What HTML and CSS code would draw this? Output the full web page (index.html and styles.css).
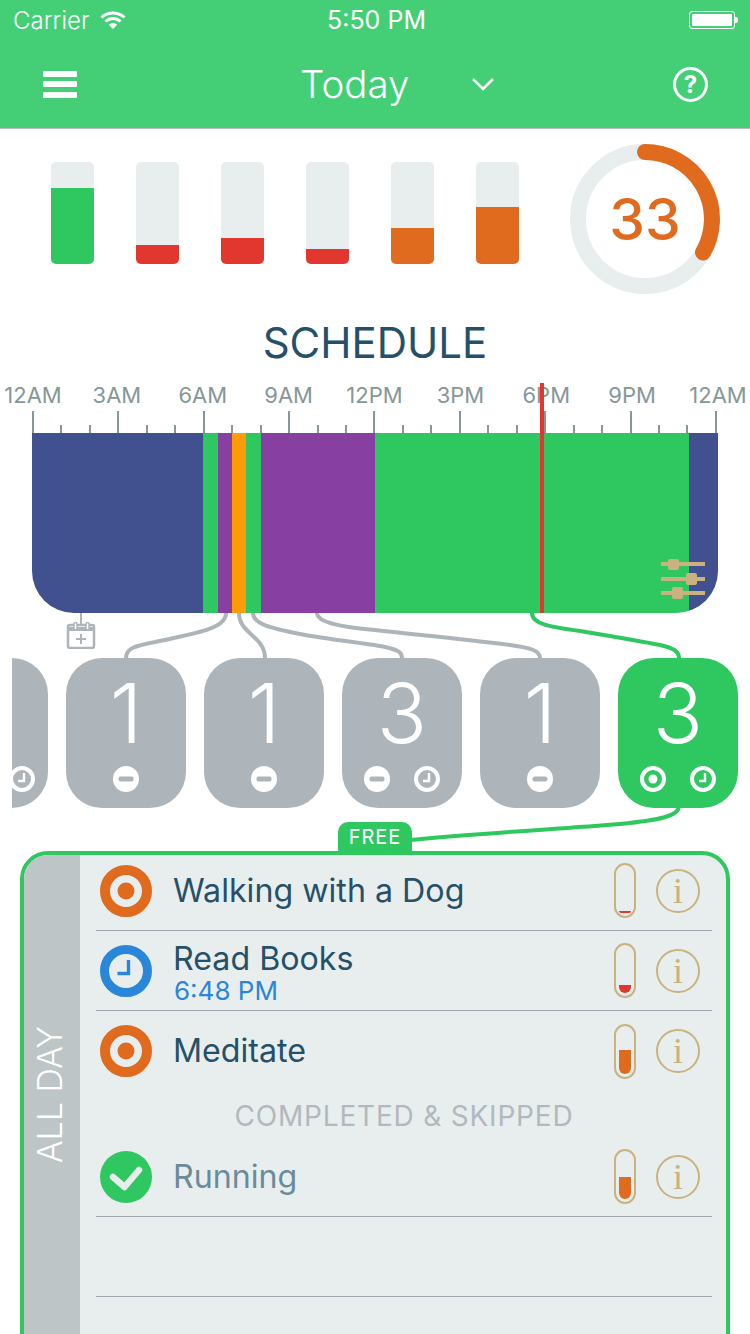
FILE: index.html
```html
<!DOCTYPE html>
<html lang="en">
<head>
  <meta charset="UTF-8">
  <meta name="viewport" content="width=device-width, initial-scale=1.0">
  <title>Today</title>
  <link rel="stylesheet" href="styles.css">
</head>
<body>
  <svg class="defs" width="0" height="0">
    <symbol id="mini-minus" viewBox="0 0 26 26">
      <circle cx="13" cy="13" r="13" fill="#fff"/>
      <rect x="5.500" y="10.500" width="15" height="5" rx="2" fill="#aeb5ba"/>
    </symbol>
    <symbol id="mini-clock" viewBox="0 0 26 26">
      <circle cx="13" cy="13" r="11" fill="none" stroke="#fff" stroke-width="4"/>
      <path d="M15 7v8H9" fill="none" stroke="#fff" stroke-width="2.400"/>
    </symbol>
    <symbol id="mini-target" viewBox="0 0 26 26">
      <circle cx="13" cy="13" r="11" fill="none" stroke="#fff" stroke-width="4"/>
      <circle cx="13" cy="13" r="4.500" fill="#fff"/>
    </symbol>
    <symbol id="target" viewBox="0 0 52 52">
      <circle cx="26" cy="26" r="21" fill="none" stroke="#e06b1e" stroke-width="10"/>
      <circle cx="26" cy="26" r="8.500" fill="#e06b1e"/>
    </symbol>
    <symbol id="clock" viewBox="0 0 52 52">
      <circle cx="26" cy="26" r="21.500" fill="none" stroke="#2a86d8" stroke-width="9"/>
      <path d="M28.500 15v13.500H17.500" fill="none" stroke="#2a86d8" stroke-width="3.400"/>
    </symbol>
    <symbol id="done" viewBox="0 0 52 52">
      <circle cx="26" cy="26" r="26" fill="#2ec760"/>
      <path d="M13 26l11.500 10L39 19" fill="none" stroke="#e8eeee" stroke-width="6.500" stroke-linecap="round" stroke-linejoin="round"/>
    </symbol>
  </svg>

  <div class="page">
    <header class="top">
      <div class="status">
        <span class="carrier">Carrier</span>
        <svg class="wifi" width="26" height="20" viewBox="0 0 26 20">
          <path d="M1.500 7.500C8 1.500 18 1.500 24.500 7.500M5.500 11.500C10 7.500 16 7.500 20.500 11.500" fill="none" stroke="#fff" stroke-width="3"/>
          <path d="M8.800 14.700C11 12.500 15 12.500 17.200 14.700L13 19z" fill="#fff"/>
        </svg>
        <span class="clock-time">5:50 PM</span>
        <div class="battery"><div class="battery-level"></div></div>
        <div class="battery-nub"></div>
      </div>
      <nav class="nav">
        <div class="hamburger"><i></i><i></i><i></i></div>
        <div class="nav-title">Today</div>
        <svg class="chevron" width="24" height="14" viewBox="0 0 24 14">
          <path d="M2 2l10 10L22 2" fill="none" stroke="#fff" stroke-width="2.500"/>
        </svg>
        <div class="help">?</div>
      </nav>
    </header>

    <section class="summary">
      <div class="levels">
        <div class="level"><div class="level-fill green" style="height: 76px"></div></div>
        <div class="level"><div class="level-fill red" style="height: 19px"></div></div>
        <div class="level"><div class="level-fill red" style="height: 26px"></div></div>
        <div class="level"><div class="level-fill red" style="height: 15px"></div></div>
        <div class="level"><div class="level-fill orange" style="height: 36px"></div></div>
        <div class="level"><div class="level-fill orange" style="height: 57px"></div></div>
      </div>
      <div class="score">
        <svg width="150" height="150" viewBox="0 0 150 150">
          <circle cx="75" cy="75" r="67" fill="none" stroke="#e8eeee" stroke-width="16"/>
          <path d="M75 8A67 67 0 0 1 133 108.500" fill="none" stroke="#e06b1e" stroke-width="16" stroke-linecap="round"/>
        </svg>
        <div class="score-value">33</div>
      </div>
    </section>

    <h1 class="schedule-title">SCHEDULE</h1>

    <section class="timeline">
      <div class="hours">
        <span>12AM</span><span>3AM</span><span>6AM</span><span>9AM</span><span>12PM</span><span>3PM</span><span>6PM</span><span>9PM</span><span>12AM</span>
      </div>
      <div class="ticks">
        <i class="major"></i><i></i><i></i><i class="major"></i><i></i><i></i><i class="major"></i><i></i><i></i><i class="major"></i><i></i><i></i><i class="major"></i><i></i><i></i><i class="major"></i><i></i><i></i><i class="major"></i><i></i><i></i><i class="major"></i><i></i><i></i><i class="major"></i>
      </div>
      <div class="bar">
        <div class="seg navy" style="width: 171px"></div>
        <div class="seg grass" style="width: 15px"></div>
        <div class="seg purple" style="width: 14px"></div>
        <div class="seg amber" style="width: 14px"></div>
        <div class="seg grass" style="width: 15px"></div>
        <div class="seg purple" style="width: 114px"></div>
        <div class="seg grass" style="width: 314px"></div>
        <div class="seg navy" style="width: 29px"></div>
        <svg class="sliders" width="44" height="40" viewBox="0 0 44 40">
          <path d="M0 5h44M0 20h44M0 34h44" stroke="#c9b27f" stroke-width="4"/>
          <rect x="7" y="0" width="11" height="11" rx="2" fill="#c9b27f"/>
          <rect x="25" y="14" width="11" height="12" rx="2" fill="#c9b27f"/>
          <rect x="11" y="28" width="11" height="12" rx="2" fill="#c9b27f"/>
        </svg>
      </div>
      <div class="now-line"></div>
    </section>

    <div class="add-row">
      <svg width="30" height="36" viewBox="0 0 30 36">
        <path d="M15 0v12" stroke="#aeb5ba" stroke-width="2"/>
        <rect x="2" y="12" width="26" height="23" rx="2" fill="none" stroke="#aeb5ba" stroke-width="2.500"/>
        <path d="M2 14h26v4H2z" fill="#aeb5ba"/>
        <path d="M8 16v-5a1.500 1.500 0 0 1 3 0v5M20 16v-5a1.500 1.500 0 0 1 3 0v5" fill="#fff" stroke="#aeb5ba" stroke-width="1.500"/>
        <path d="M15 21v10M10 26h10" stroke="#aeb5ba" stroke-width="2"/>
      </svg>
    </div>

    <div class="cards">
      <div class="card first">
        <div class="card-num"></div>
        <div class="card-icons"><svg><use href="#mini-minus"/></svg><svg><use href="#mini-clock"/></svg></div>
      </div>
      <div class="card">
        <div class="card-num">1</div>
        <div class="card-icons"><svg><use href="#mini-minus"/></svg></div>
      </div>
      <div class="card">
        <div class="card-num">1</div>
        <div class="card-icons"><svg><use href="#mini-minus"/></svg></div>
      </div>
      <div class="card">
        <div class="card-num">3</div>
        <div class="card-icons"><svg><use href="#mini-minus"/></svg><svg><use href="#mini-clock"/></svg></div>
      </div>
      <div class="card">
        <div class="card-num">1</div>
        <div class="card-icons"><svg><use href="#mini-minus"/></svg></div>
      </div>
      <div class="card active">
        <div class="card-num">3</div>
        <div class="card-icons"><svg><use href="#mini-target"/></svg><svg><use href="#mini-clock"/></svg></div>
      </div>
    </div>

    <div class="free-badge">FREE</div>

    <section class="panel">
      <div class="panel-side"><span>ALL DAY</span></div>
      <div class="panel-list">
        <div class="row row-first">
          <svg class="row-icon"><use href="#target"/></svg>
          <div class="row-text">Walking with a Dog</div>
          <div class="tube"><div class="tube-fill red" style="height: 2px"></div></div>
          <div class="info">i</div>
        </div>
        <div class="row">
          <svg class="row-icon"><use href="#clock"/></svg>
          <div class="row-text has-time">Read Books<small>6:48 PM</small></div>
          <div class="tube"><div class="tube-fill red" style="height: 8px"></div></div>
          <div class="info">i</div>
        </div>
        <div class="row row-plain">
          <svg class="row-icon"><use href="#target"/></svg>
          <div class="row-text">Meditate</div>
          <div class="tube"><div class="tube-fill orange" style="height: 24px"></div></div>
          <div class="info">i</div>
        </div>
        <div class="list-heading">COMPLETED &amp; SKIPPED</div>
        <div class="row">
          <svg class="row-icon"><use href="#done"/></svg>
          <div class="row-text muted">Running</div>
          <div class="tube"><div class="tube-fill orange" style="height: 22px"></div></div>
          <div class="info">i</div>
        </div>
        <div class="row"></div>
      </div>
    </section>

    <!-- lines between the bar, the cards and the panel -->
    <svg class="links" width="750" height="1334" viewBox="0 0 750 1334">
      <g fill="none" stroke="#aeb5ba" stroke-width="4">
        <path d="M226 613C226 630 190 634 155 642C135 646 126 648 126 658"/>
        <path d="M239 613C239 634 265 636 265 658"/>
        <path d="M253 613C253 624 270 628 300 634C330 640 375 644 385 647C398 650 402 652 402 658"/>
        <path d="M317 613C317 622 340 627 375 630C420 635 470 640 510 645C532 648 540 651 540 658"/>
      </g>
      <g fill="none" stroke="#2ec760" stroke-width="4">
        <path d="M532 613C532 624 550 627 580 631C610 636 640 641 660 645C673 648 679 651 679 658"/>
        <path d="M679 806C679 816 660 820 620 824C560 829 480 833 410 840"/>
      </g>
    </svg>
  </div>
</body>
</html>
```

FILE: styles.css
```css
* {
  box-sizing: border-box;
}

body {
  margin: 0;
  font-family: Inter, 'Noto Sans', sans-serif;
  background-color: #fff;
}

.defs {
  position: absolute;
}

.page {
  position: relative;
  width: 750px;
  height: 1334px;
  overflow: hidden;
}

/* header */
.top {
  height: 129px;
  background-color: #44cf76;
  border-bottom: 1px solid #b5c4bb;
  color: #fff;
}

.status {
  position: relative;
  display: flex;
  align-items: center;
  height: 40px;
  padding: 0 12px 0 13px;
  font-size: 24px;
  font-weight: 300;
}

.wifi {
  margin-left: 10px;
}

.clock-time {
  position: absolute;
  left: 3px;
  right: 0;
  text-align: center;
  font-size: 25px;
  font-weight: 400;
}

.battery {
  margin-left: auto;
  width: 46px;
  height: 18px;
  padding: 2px;
  border: 1px solid #fff;
  border-radius: 3px;
}

.battery-level {
  height: 100%;
  background-color: #fff;
  border-radius: 1px;
}

.battery-nub {
  width: 3px;
  height: 6px;
  background-color: #fff;
  border-radius: 0 2px 2px 0;
}

.nav {
  display: flex;
  align-items: center;
  height: 88px;
  padding: 0 42px 0 43px;
}

.hamburger {
  display: flex;
  flex-direction: column;
  gap: 4.500px;
  width: 34px;
}

.hamburger i {
  height: 6px;
  background-color: #fff;
  border-radius: 1px;
}

.nav-title {
  margin-left: 223px;
  font-size: 38.500px;
  font-weight: 300;
}

.chevron {
  margin-left: 62px;
}

.help {
  margin-left: auto;
  width: 35px;
  height: 35px;
  border: 3px solid #fff;
  border-radius: 50%;
  text-align: center;
  font-size: 24px;
  font-weight: 700;
  line-height: 29px;
}

/* bars and score */
.summary {
  display: flex;
  padding: 15px 30px 0 51px;
}

.levels {
  display: flex;
  gap: 42px;
  padding-top: 18px;
}

.level {
  display: flex;
  align-items: flex-end;
  width: 43px;
  height: 102px;
  background-color: #e8eeee;
  border-radius: 5px;
  overflow: hidden;
}

.level-fill {
  width: 100%;
}

.green { background-color: #2ec760; }
.red { background-color: #e2372f; }
.orange { background-color: #e06b1e; }

.score {
  display: grid;
  margin-left: 51px;
  width: 150px;
  height: 150px;
}

.score svg,
.score-value {
  grid-area: 1 / 1;
}

.score-value {
  text-align: center;
  color: #e06b1e;
  font-size: 57px;
  font-weight: 500;
  line-height: 152px;
}

/* schedule */
.schedule-title {
  margin: 24px 0 0;
  height: 50px;
  text-align: center;
  color: #265068;
  font-size: 42px;
  font-weight: 400;
  line-height: 50px;
}

.timeline {
  position: relative;
  padding: 14px 32px 0;
}

.hours {
  display: flex;
  justify-content: space-between;
  height: 26px;
  margin-left: -1px;
  color: #869797;
  font-size: 22px;
  line-height: 26px;
}

.hours span {
  display: flex;
  justify-content: center;
  width: 0;
}

.hours span:first-child {
  margin: 0 -2px 0 2px;
}

.ticks {
  display: flex;
  justify-content: space-between;
  align-items: flex-end;
  height: 22px;
  margin-top: 3px;
  padding-right: 1px;
}

.ticks i {
  width: 2px;
  height: 8px;
  background-color: #869797;
}

.ticks i.major {
  height: 22px;
}

.bar {
  position: relative;
  display: flex;
  height: 180px;
  border-radius: 0 0 42px 42px;
  overflow: hidden;
}

.seg {
  flex: none;
}

.navy { background-color: #41508f; }
.grass { background-color: #2ec760; }
.purple { background-color: #883fa2; }
.amber { background-color: #ff9a08; }

.sliders {
  position: absolute;
  right: 13px;
  bottom: 14px;
}

.now-line {
  position: absolute;
  left: 540px;
  top: 15px;
  bottom: 0;
  width: 4px;
  background-color: #e2372f;
}

.add-row {
  display: flex;
  height: 45px;
  padding-left: 66px;
}

/* cards */
.cards {
  display: flex;
  gap: 18px;
  margin-left: 12px;
  overflow: hidden;
}

.card {
  flex: none;
  width: 120px;
  height: 150px;
  padding-top: 10px;
  background-color: #aeb5ba;
  border-radius: 36px;
  color: #fff;
  text-align: center;
}

.card.first {
  margin-left: -84px;
}

.card.first .card-icons {
  margin-left: 18px;
}

.card.active {
  background-color: #2ec760;
}

.card-num {
  height: 90px;
  font-size: 83px;
  font-weight: 300;
  line-height: 90px;
}

.card-icons {
  display: flex;
  justify-content: center;
  gap: 24px;
  margin-top: 8px;
}

.card-icons svg {
  width: 26px;
  height: 26px;
}

.free-badge {
  position: relative;
  width: 74px;
  height: 30px;
  margin: 14px 0 -1px 338px;
  background-color: #2ec760;
  border-radius: 10px 10px 0 0;
  color: #fff;
  text-align: center;
  font-size: 20px;
  line-height: 30px;
  letter-spacing: 1px;
}

/* list panel */
.panel {
  display: flex;
  height: 488px;
  margin: 0 20px;
  background-color: #e8eeee;
  border: 4px solid #2ec760;
  border-radius: 28px 28px 0 0;
  overflow: hidden;
}

.panel-side {
  display: flex;
  align-items: center;
  justify-content: center;
  width: 56px;
  padding-right: 5px;
  background-color: #bdc5c7;
  color: #fff;
  font-size: 34px;
  font-weight: 300;
}

.panel-side span {
  writing-mode: vertical-rl;
  transform: rotate(180deg);
}

.panel-list {
  flex: 1;
  margin: 0 14px 0 16px;
}

.row {
  display: flex;
  align-items: center;
  height: 80px;
  padding: 0 12px 0 4px;
  border-bottom: 1px solid #a0a6ad;
}

.row-first {
  height: 76px;
  padding-bottom: 4px;
}

.row-plain {
  border-bottom: none;
}

.row-icon {
  flex: none;
  width: 52px;
  height: 52px;
}

.row-text {
  flex: 1;
  margin-left: 21px;
  color: #265068;
  font-size: 32.200px;
  line-height: 36px;
}

.row-text.has-time {
  padding-top: 4px;
}

.row-text small {
  display: block;
  margin-left: 1px;
  color: #2a86d8;
  font-size: 26px;
  line-height: 28px;
}

.row-text.muted {
  color: #6c8a9a;
}

.tube {
  display: flex;
  flex: none;
  align-items: flex-end;
  justify-content: center;
  width: 22px;
  height: 55px;
  padding-bottom: 3px;
  border: 2px solid #c9b27f;
  border-radius: 11px;
}

.tube-fill {
  width: 12px;
  border-radius: 0 0 6px 6px;
}

.info {
  flex: none;
  width: 44px;
  height: 44px;
  margin-left: 20px;
  border: 2px solid #c9b27f;
  border-radius: 50%;
  text-align: center;
  color: #c9b27f;
  font-family: 'Liberation Serif', serif;
  font-size: 36px;
  line-height: 40px;
}

.list-heading {
  height: 46px;
  padding-top: 7px;
  text-align: center;
  color: #b2b9be;
  font-size: 28px;
  letter-spacing: 0.8px;
  line-height: 36px;
}

.links {
  position: absolute;
  left: 0;
  top: 0;
}
```
